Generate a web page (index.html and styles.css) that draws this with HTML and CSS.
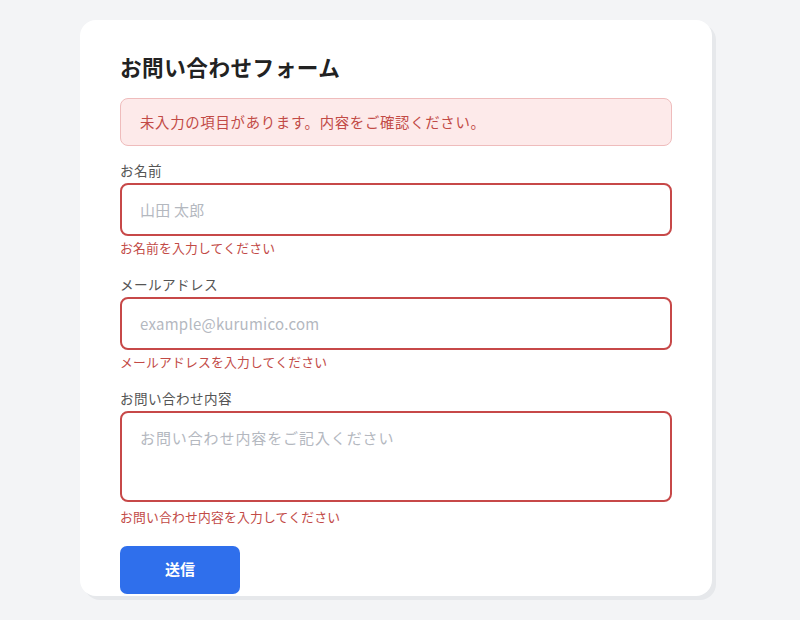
FILE: index.html
```html
<!DOCTYPE html>
<html lang="ja">
<head>
<meta charset="utf-8">
<title>お問い合わせフォーム</title>
<link rel="stylesheet" href="styles.css">
</head>
<body>
<div class="card">
  <h1 class="title">お問い合わせフォーム</h1>
  <div class="alert">未入力の項目があります。内容をご確認ください。</div>
  <div class="field">
    <label class="label">お名前</label>
    <input class="input" type="text" placeholder="山田 太郎">
    <p class="error">お名前を入力してください</p>
  </div>
  <div class="field">
    <label class="label">メールアドレス</label>
    <input class="input" type="email" placeholder="example@kurumico.com">
    <p class="error">メールアドレスを入力してください</p>
  </div>
  <div class="field field-last">
    <label class="label">お問い合わせ内容</label>
    <textarea class="input textarea" placeholder="お問い合わせ内容をご記入ください"></textarea>
    <p class="error error-ta">お問い合わせ内容を入力してください</p>
  </div>
  <button class="submit" type="button">送信</button>
</div>
</body>
</html>
```

FILE: styles.css
```css
* { box-sizing: border-box; }
html, body {
  margin: 0;
  padding: 0;
  background: #f3f4f6;
  font-family: "Noto Sans CJK JP", "Noto Sans", sans-serif;
}
body { height: 620px; overflow: hidden; }
.card {
  margin: 20px 0 0 80px;
  width: 632px;
  background: #fff;
  border-radius: 16px;
  box-shadow: 4px 4px 0 #e6e8eb;
  padding: 32px 40px 2px 40px;
}
.title {
  margin: 0 0 16px;
  font-size: 21.6px;
  line-height: 30px;
  font-weight: 700;
  letter-spacing: 0.5px;
  color: #222;
}
.alert {
  background: #fdeaea;
  border: 1px solid #efbcbc;
  border-radius: 8px;
  padding: 13px 19px;
  font-size: 14.4px;
  line-height: 20px;
  letter-spacing: 0.7px;
  color: #c24a46;
  margin-bottom: 15px;
}
.field { margin-bottom: 19px; }
.field-last { margin-bottom: 21px; }
.label {
  display: block;
  font-size: 13.6px;
  line-height: 19px;
  letter-spacing: 0.4px;
  color: #555;
  margin-bottom: 3px;
}
.input {
  display: block;
  width: 100%;
  height: 53px;
  border: 2px solid #c74848;
  border-radius: 8px;
  padding: 0 18px;
  font-family: inherit;
  font-size: 15px;
  color: #222;
  background: #fff;
  outline: none;
  letter-spacing: 0.25px;
}
.input::placeholder { color: #b4b8bf; }
.textarea {
  height: 91px;
  padding: 14px 18px;
  line-height: 22px;
  letter-spacing: 0.9px;
  resize: none;
}
.error {
  margin: 4px 0 0;
  font-size: 12.8px;
  line-height: 16px;
  letter-spacing: 0.2px;
  color: #c24a46;
}
.error-ta { margin-top: 7px; }
.submit {
  display: block;
  width: 120px;
  height: 48px;
  border: none;
  border-radius: 7px;
  background: #2f6fec;
  color: #fff;
  font-family: inherit;
  font-size: 15px;
  font-weight: 700;
  padding: 0 0 3px;
}
```
